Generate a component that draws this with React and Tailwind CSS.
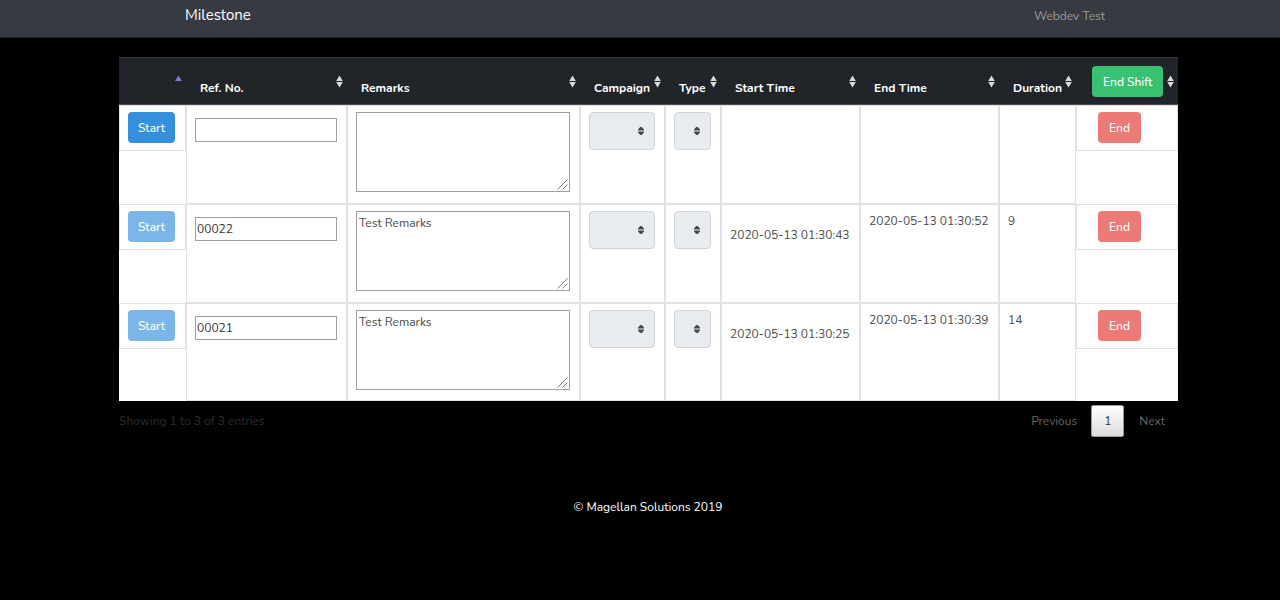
import { useState } from "react";

const columns = [
  { label: "", name: "action", width: "w-[67px]" },
  { label: "Ref. No.", name: "reference number", width: "w-[161px]" },
  { label: "Remarks", name: "remarks", width: "w-[233px]" },
  { label: "Campaign", name: "campaign", width: "w-[85px]" },
  { label: "Type", name: "type", width: "w-[56px]" },
  { label: "Start Time", name: "start time", width: "w-[139px]" },
  { label: "End Time", name: "end time", width: "w-[139px]" },
  { label: "Duration", name: "duration", width: "w-[77px]" },
  { label: "End Shift", name: "end", width: "w-[102px]", action: true },
];

const initialRows = [
  { id: "new", ref: "", remarks: "", start: "", end: "", duration: "", open: true },
  { id: "22", ref: "00022", remarks: "Test Remarks", start: "2020-05-13 01:30:43", end: "2020-05-13 01:30:52", duration: "9" },
  { id: "21", ref: "00021", remarks: "Test Remarks", start: "2020-05-13 01:30:25", end: "2020-05-13 01:30:39", duration: "14" },
];

function SortIcon({ ascending }) {
  return (
    <svg width="7" height="13" viewBox="0 0 7 13" aria-hidden="true">
      {ascending ? (
        <path d="M0 6 3.5 0.5 7 6Z" fill="#7c79cf" />
      ) : (
        <path d="M0.2 6 3.5 0.5 6.8 6ZM0.2 7 3.5 12.5 6.8 7Z" fill="#d9dbde" />
      )}
    </svg>
  );
}

function HeaderCell({ column, first }) {
  return (
    <th scope="col" className="h-12 border-t border-b border-t-[#32383e] border-b-[#454d55] p-0 text-left align-top">
      <div className="flex justify-between pr-1">
        {column.action ? (
          <button type="button" className="mt-2 ml-4 h-[31px] rounded bg-[#38c172] px-[11px] text-[12px] font-medium whitespace-nowrap text-white">
            {column.label}
          </button>
        ) : (
          <span className="pt-[21px] pl-3.5 text-[12px] leading-[18px] font-bold whitespace-nowrap text-white">{column.label}</span>
        )}
        <button type="button" aria-label={"Sort by " + column.name} className="mt-[17px] h-[13px] w-[7px] shrink-0">
          <SortIcon ascending={first} />
        </button>
      </div>
    </th>
  );
}

function DisabledSelect({ label }) {
  return (
    <div className="relative">
      <select disabled aria-label={label} className="block h-[38px] w-full appearance-none rounded border border-[#ced4da] bg-[#e9ecef] opacity-100" />
      <svg className="pointer-events-none absolute top-[15px] right-[11px]" width="6" height="8" viewBox="0 0 6 8" aria-hidden="true">
        <path d="M0 3.4V2.4L2.2 0H3.8L6 2.4V3.4ZM0 4.6V5.6L2.2 8H3.8L6 5.6V4.6Z" fill="#454b52" />
      </svg>
    </div>
  );
}

function Cell({ children }) {
  return <td className="border border-[#dee2e6] pt-1.5 pr-[9px] pb-1.5 pl-2 align-top leading-5 whitespace-nowrap">{children}</td>;
}

function Row({ row }) {
  const [ref, setRef] = useState(row.ref);
  const [remarks, setRemarks] = useState(row.remarks);
  return (
    <tr className="h-[99px] last:h-[98px]">
      <td className="p-0 align-top">
        <div className="h-[46px] border border-[#dee2e6] px-2 py-1.5">
          <button type="button" disabled={!row.open} className="block h-[31px] w-[47px] rounded bg-[#3490dc] font-medium text-white disabled:opacity-65">
            Start
          </button>
        </div>
      </td>
      <Cell>
        <input
          type="text"
          aria-label="Reference number"
          value={ref}
          onChange={(e) => setRef(e.target.value)}
          className="mt-1.5 block h-6 w-full border border-[#a0a0a0] bg-white px-px text-[#333]"
        />
      </Cell>
      <Cell>
        <div className="relative">
          <textarea
            aria-label="Remarks"
            value={remarks}
            onChange={(e) => setRemarks(e.target.value)}
            className="block h-20 w-full resize-none border border-[#a0a0a0] bg-white px-0.5 py-px"
          />
          <svg className="pointer-events-none absolute right-0.5 bottom-0.5" width="11" height="11" viewBox="0 0 11 11" fill="none" stroke="#777" aria-hidden="true">
            <path d="M0.5 10.5 10.5 0.5M5.5 10.5 10.5 5.5" />
          </svg>
        </div>
      </Cell>
      <Cell><DisabledSelect label="Campaign" /></Cell>
      <Cell><DisabledSelect label="Type" /></Cell>
      <Cell><p className="pt-3.5">{row.start}</p></Cell>
      <Cell>{row.end}</Cell>
      <Cell>{row.duration}</Cell>
      <td className="p-0 align-top">
        <div className="h-[46px] border border-[#dee2e6] py-1.5 pl-[21px]">
          <button type="button" disabled className="block h-[31px] w-[43px] rounded bg-[#e3342f] font-medium text-white opacity-65">
            End
          </button>
        </div>
      </td>
    </tr>
  );
}

export default function App() {
  return (
    <div className="flex min-h-screen flex-col bg-black font-['Nunito','Lato',sans-serif] text-[12px] text-[#4a4a4a]">
      <nav className="flex h-[38px] items-start justify-between border-b border-[#25282c] bg-[#373a41] pt-1.5 pr-[175px] pl-[185px] leading-5">
        <a href="#home" className="text-[15px] leading-[18px] text-white">Milestone</a>
        <a href="#account" className="text-[#9b9da0]">Webdev Test</a>
      </nav>
      <main className="pt-[19px] pr-[102px] pl-[119px]">
        <table className="w-full table-fixed border-separate border-spacing-0 bg-white">
          <colgroup>
            {columns.map((c) => <col key={c.name} className={c.width} />)}
          </colgroup>
          <thead className="bg-[#212529]">
            <tr>{columns.map((c, i) => <HeaderCell key={c.name} column={c} first={i === 0} />)}</tr>
          </thead>
          <tbody>{initialRows.map((r) => <Row key={r.id} row={r} />)}</tbody>
        </table>
        <div className="flex items-center justify-between pt-1 pr-[13px]">
          <p className="text-[#2d2d2d]">Showing 1 to 3 of 3 entries</p>
          <div className="flex items-center">
            <button type="button" disabled className="text-[#666]">Previous</button>
            <button type="button" className="mr-[15px] ml-3.5 h-8 w-[33px] rounded-xs border border-[#979797] bg-linear-to-b from-white to-[#dcdcdc] text-[#333]">1</button>
            <button type="button" disabled className="text-[#666]">Next</button>
          </div>
        </div>
      </main>
      <footer className="pt-[60px] pr-[102px] pl-[118px] text-center leading-5 text-white">© Magellan Solutions 2019</footer>
    </div>
  );
}
